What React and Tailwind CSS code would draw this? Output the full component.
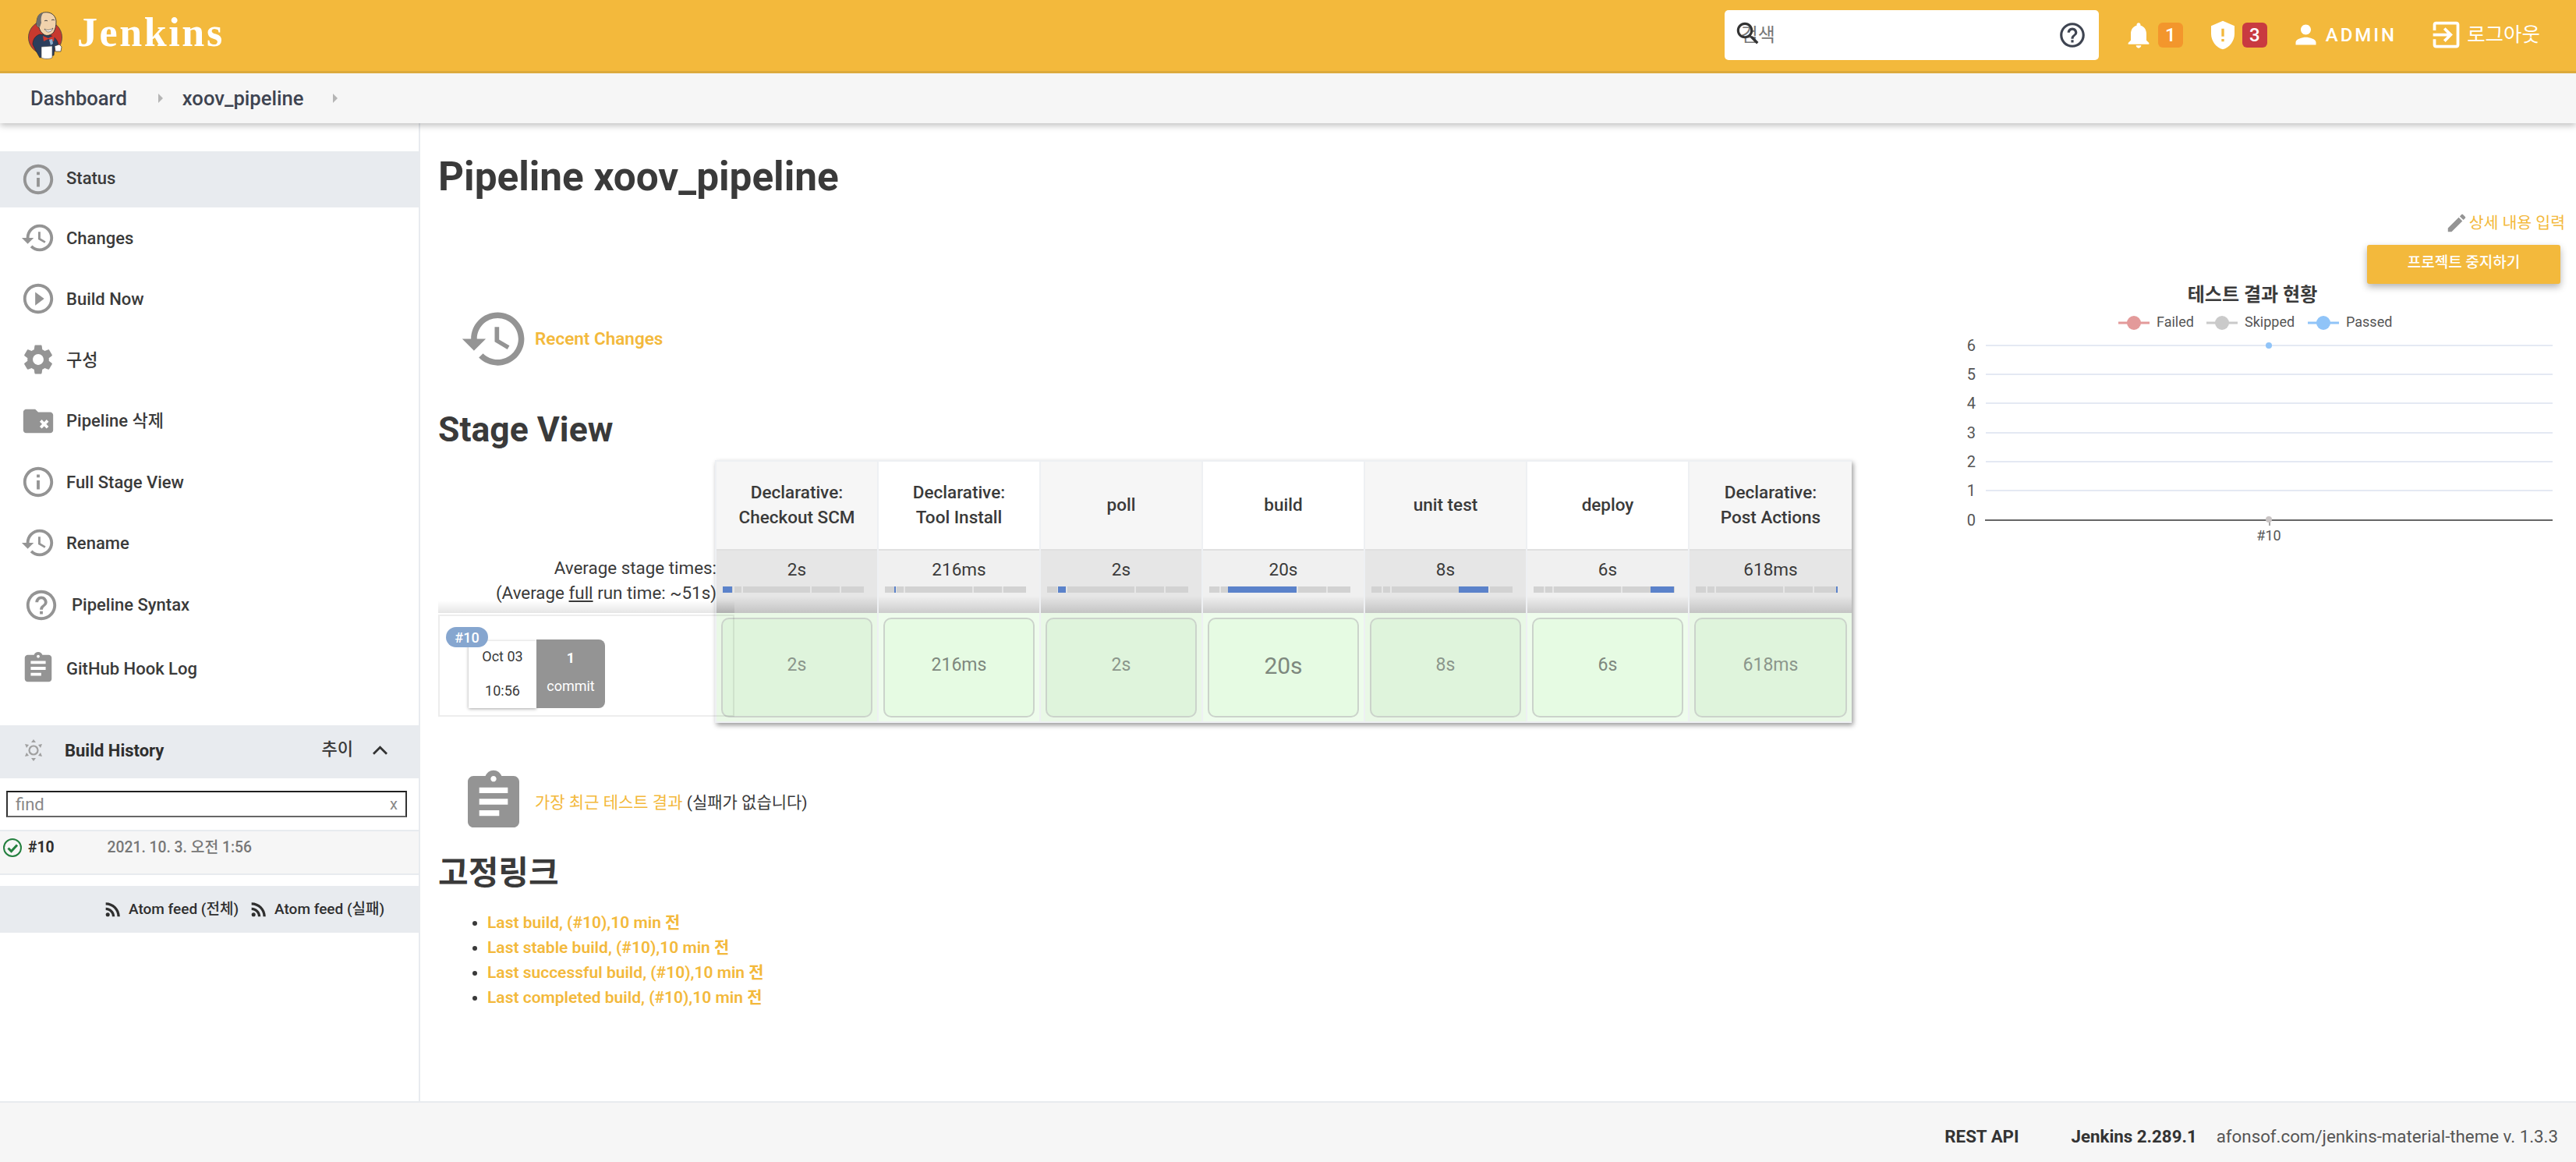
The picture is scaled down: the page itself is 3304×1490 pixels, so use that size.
import React from 'react';

const paths = {
  info: 'M11 7h2v2h-2zm0 4h2v6h-2zm1-9C6.48 2 2 6.48 2 12s4.48 10 10 10 10-4.48 10-10S17.52 2 12 2zm0 18c-4.41 0-8-3.59-8-8s3.59-8 8-8 8 3.59 8 8-3.59 8-8 8z',
  history: 'M13 3c-4.97 0-9 4.03-9 9H1l3.89 3.89.07.14L9 12H6c0-3.87 3.13-7 7-7s7 3.13 7 7-3.13 7-7 7c-1.93 0-3.68-.79-4.94-2.06l-1.42 1.42C8.27 19.99 10.51 21 13 21c4.97 0 9-4.03 9-9s-4.03-9-9-9zm-1 5v5l4.28 2.54.72-1.21-3.5-2.08V8H12z',
  play: 'M10 16.5l6-4.5-6-4.5v9zM12 2C6.48 2 2 6.48 2 12s4.48 10 10 10 10-4.48 10-10S17.52 2 12 2zm0 18c-4.41 0-8-3.59-8-8s3.59-8 8-8 8 3.59 8 8-3.59 8-8 8z',
  gear: 'M19.14 12.94c.04-.3.06-.61.06-.94 0-.32-.02-.64-.07-.94l2.03-1.58c.18-.14.23-.41.12-.61l-1.92-3.32c-.12-.22-.37-.29-.59-.22l-2.39.96c-.5-.38-1.03-.7-1.62-.94l-.36-2.54c-.04-.24-.24-.41-.48-.41h-3.84c-.24 0-.43.17-.47.41l-.36 2.54c-.59.24-1.13.57-1.62.94l-2.39-.96c-.22-.08-.47 0-.59.22L2.74 8.87c-.12.21-.08.47.12.61l2.03 1.58c-.05.3-.09.63-.09.94s.02.64.07.94l-2.03 1.58c-.18.14-.23.41-.12.61l1.92 3.32c.12.22.37.29.59.22l2.39-.96c.5.38 1.03.7 1.62.94l.36 2.54c.05.24.24.41.48.41h3.84c.24 0 .44-.17.47-.41l.36-2.54c.59-.24 1.13-.56 1.62-.94l2.39.96c.22.08.47 0 .59-.22l1.92-3.32c.12-.22.07-.47-.12-.61l-2.01-1.58zM12 15.6c-1.98 0-3.6-1.62-3.6-3.6s1.62-3.6 3.6-3.6 3.6 1.62 3.6 3.6-1.62 3.6-3.6 3.6z',
  folderX: 'M10 4H4c-1.1 0-2 .9-2 2v12c0 1.1.9 2 2 2h16c1.1 0 2-.9 2-2V8c0-1.1-.9-2-2-2h-8l-2-2zm4.4 7l1.6 1.6 1.6-1.6 1.4 1.4-1.6 1.6 1.6 1.6-1.4 1.4-1.6-1.6-1.6 1.6-1.4-1.4 1.6-1.6-1.6-1.6 1.4-1.4z',
  help: 'M11 18h2v-2h-2v2zm1-16C6.48 2 2 6.48 2 12s4.48 10 10 10 10-4.48 10-10S17.52 2 12 2zm0 18c-4.41 0-8-3.59-8-8s3.59-8 8-8 8 3.59 8 8-3.59 8-8 8zm0-14c-2.21 0-4 1.79-4 4h2c0-1.1.9-2 2-2s2 .9 2 2c0 2-3 1.75-3 5h2c0-2.25 3-2.5 3-5 0-2.21-1.79-4-4-4z',
  clipboard: 'M19 3h-4.18C14.4 1.84 13.3 1 12 1c-1.3 0-2.4.84-2.82 2H5c-1.1 0-2 .9-2 2v14c0 1.1.9 2 2 2h14c1.1 0 2-.9 2-2V5c0-1.1-.9-2-2-2zm-7 0c.55 0 1 .45 1 1s-.45 1-1 1-1-.45-1-1 .45-1 1-1zm2 14H7v-2h7v2zm3-4H7v-2h10v2zm0-4H7V7h10v2z',
  search: 'M15.5 14h-.79l-.28-.27C15.41 12.59 16 11.11 16 9.5 16 5.91 13.09 3 9.5 3S3 5.91 3 9.5 5.91 16 9.5 16c1.61 0 3.09-.59 4.23-1.57l.27.28v.79l5 4.99L20.49 19l-4.99-5zm-6 0C7.01 14 5 11.99 5 9.5S7.01 5 9.5 5 14 7.01 14 9.5 11.99 14 9.5 14z',
  bell: 'M12 22c1.1 0 2-.9 2-2h-4c0 1.1.9 2 2 2zm6-6v-5c0-3.07-1.64-5.64-4.5-6.32V4c0-.83-.67-1.5-1.5-1.5s-1.5.67-1.5 1.5v.68C7.63 5.36 6 7.92 6 11v5l-2 2v1h16v-1l-2-2z',
  shield: 'M12 1L3 5v6c0 5.55 3.84 10.74 9 12 5.16-1.26 9-6.45 9-12V5l-9-4zm-1 6h2v6h-2zm0 8h2v2h-2z',
  user: 'M12 12c2.21 0 4-1.79 4-4s-1.79-4-4-4-4 1.79-4 4 1.79 4 4 4zm0 2c-2.67 0-8 1.34-8 4v2h16v-2c0-2.66-5.33-4-8-4z',
  logout: 'M10.09 15.59L11.5 17l5-5-5-5-1.41 1.41L12.67 11H3v2h9.67l-2.58 2.59zM19 3H5c-1.11 0-2 .9-2 2v4h2V5h14v14H5v-4H3v4c0 1.1.89 2 2 2h14c1.1 0 2-.9 2-2V5c0-1.1-.9-2-2-2z',
  edit: 'M3 17.25V21h3.75L17.81 9.94l-3.75-3.75L3 17.25zM20.71 7.04c.39-.39.39-1.02 0-1.41l-2.34-2.34c-.39-.39-1.02-.39-1.41 0l-1.83 1.83 3.75 3.75 1.83-1.83z',
  rss: 'M6.18 15.64a2.18 2.18 0 1 0 0 4.36 2.18 2.18 0 0 0 0-4.36zM4 4.44v2.83c7.03 0 12.73 5.7 12.73 12.73h2.83c0-8.59-6.97-15.56-15.56-15.56zm0 5.66v2.83c3.9 0 7.07 3.17 7.07 7.07h2.83c0-5.47-4.43-9.9-9.9-9.9z',
};

const Icon = ({ name, className }) => (
  <svg viewBox="0 0 24 24" className={className} fill="currentColor" fillRule="evenodd">
    <path d={paths[name]} />
  </svg>
);

const JenkinsLogo = () => (
  <svg viewBox="0 0 44 62" className="w-[44px] h-[62px] shrink-0">
    <ellipse cx="22" cy="33" rx="21.5" ry="21.5" fill="#c8392e" stroke="#444" strokeWidth="0.8" />
    <path d="M6 42c0-6 3-11 9-13l12 1c5 1 9 4 11 9l1 6-5 2-1 9-18 3-5-9z" fill="#2c3e5c" stroke="#222" strokeWidth="0.6" />
    <path d="M12 8c2-6 8-8 14-7 6 1 10 6 10 12 0 5-1 9-3 13-3 4-9 6-13 3-3-2-5-5-6-9-2 0-4-3-3-6 0-3 1-5 1-6z" fill="#f1d2ac" stroke="#333" strokeWidth="0.9" />
    <path d="M12 8c1-5 5-7 8-7-3 3-4 8-3 13l-2 6c-3-1-5-4-4-7z" fill="#6d6d6d" />
    <path d="M21 22c3 2 7 2 11-1-1 3-3 5-6 5-2 0-4-2-5-4z" fill="#fff" stroke="#333" strokeWidth="0.6" />
    <path d="M21 12c1-1 3-1 4 0M30 11c1-1 3-1 4 0" fill="none" stroke="#333" strokeWidth="0.9" />
    <path d="M19 31l7 3 8-4-1 8-7-3-6 3z" fill="#d13a2f" />
    <path d="M27 36l4-1 1 6-3 2z" fill="#8fb0cf" />
    <path d="M17 45l14-1 0 15c-4 2-10 2-14 0z" fill="#fff" stroke="#444" strokeWidth="0.6" />
    <path d="M34 44l6-2 3 3-1 6-7 0z" fill="#fff" stroke="#333" strokeWidth="0.7" />
  </svg>
);

const SunIcon = () => (
  <svg viewBox="0 0 24 28" className="w-[24px] h-[28px] text-[#a0a0a0]" fill="currentColor">
    <circle cx="12" cy="14" r="5.5" fill="none" stroke="currentColor" strokeWidth="2.2" />
    <path d="M12 0l3 4H9zM12 28l-3-4h6zM1 6l5 1-3 4zM23 6l-2 5-3-4zM1 22l2-5 3 4zM23 22l-5-1 3-4z" />
  </svg>
);

const sideItems = [
  { label: 'Changes', icon: 'history', rowClass: 'h-[78px] pl-[26px] gap-[13px]' },
  { label: 'Build Now', icon: 'play', rowClass: 'h-[78px] pl-[26px] gap-[13px]' },
  { label: '구성', icon: 'gear', rowClass: 'h-[78px] pl-[26px] gap-[13px]' },
  { label: 'Pipeline 삭제', icon: 'folderX', rowClass: 'h-[79px] pl-[26px] gap-[13px]' },
  { label: 'Full Stage View', icon: 'info', rowClass: 'h-[78px] pl-[26px] gap-[13px]' },
  { label: 'Rename', icon: 'history', rowClass: 'h-[78px] pl-[26px] gap-[13px]' },
  { label: 'Pipeline Syntax', icon: 'help', rowClass: 'h-[81px] pl-[30px] gap-[16px]' },
  { label: 'GitHub Hook Log', icon: 'clipboard', rowClass: 'h-[82px] pl-[26px] gap-[13px]' },
];

const stages = [
  { title: ['Declarative:', 'Checkout SCM'], avg: '2s', left: 0, width: 12 },
  { title: ['Declarative:', 'Tool Install'], avg: '216ms', left: 12, width: 1.5 },
  { title: ['poll'], avg: '2s', left: 14, width: 10 },
  { title: ['build'], avg: '20s', left: 24, width: 88, big: true },
  { title: ['unit test'], avg: '8s', left: 112, width: 38 },
  { title: ['deploy'], avg: '6s', left: 150, width: 30 },
  { title: ['Declarative:', 'Post Actions'], avg: '618ms', left: 180, width: 1.5 },
];

const separators = [13, 24, 112, 150];

const StageColumn = ({ stage, odd }) => (
  <div className="w-[208px] shrink-0 flex flex-col border-r-2 border-[#eef0f3] last:border-r-0">
    <div className={`h-[112px] pb-[3px] flex flex-col items-center justify-center text-[22.5px] leading-[32px] font-medium text-[#3a3a3a] ${odd ? 'bg-[#f6f6f6]' : 'bg-white'}`}>
      {stage.title.map((line) => (
        <div key={line}>{line}</div>
      ))}
    </div>
    <div className={`relative h-[82px] border-t-2 border-[#e0e0e0] ${odd ? 'bg-[#e6e6e6]' : 'bg-[#f0f0f0]'}`}>
      <div className="text-center text-[22.5px] leading-[32px] text-[#3a3a3a] pt-[8px]">{stage.avg}</div>
      <div className="absolute left-[8px] top-[46px] w-[181px] h-[8px] bg-[#d2d2d2]">
        {separators.map((x) => (
          <div key={x} className="absolute top-0 h-full w-[2px] bg-[#e6e6e6]" style={{ left: x }} />
        ))}
        <div className="absolute top-0 h-full bg-[#5b82ca]" style={{ left: stage.left, width: stage.width }} />
      </div>
      <div className="absolute inset-x-0 bottom-0 h-[22px] bg-gradient-to-b from-transparent to-black/15" />
    </div>
    <div className={`h-[139px] p-[6px] pb-[4px] ${odd ? 'bg-[#e9f8e6]' : 'bg-[#eefcec]'}`}>
      <div className={`h-[128px] pb-[5px] rounded-[10px] border-2 border-[#cbd3cb] flex items-center justify-center ${odd ? 'bg-[#dff4dc] text-[#8b968b]' : 'bg-[#e6fbe3] text-[#7e887e]'} ${stage.big ? 'text-[30px] text-[#5f665f]' : 'text-[23px]'}`}>
        {stage.avg}
      </div>
    </div>
  </div>
);

const legend = [
  { label: 'Failed', color: '#e39a9a', x: 2737, tx: 2766 },
  { label: 'Skipped', color: '#cacaca', x: 2850, tx: 2879 },
  { label: 'Passed', color: '#90c4f8', x: 2980, tx: 3009 },
];

const grid = [
  { n: 6, y: 444 },
  { n: 5, y: 481 },
  { n: 4, y: 518 },
  { n: 3, y: 556 },
  { n: 2, y: 593 },
  { n: 1, y: 630 },
];

// chart coordinates are the screenshot's, the viewBox shifts them into the panel
const TrendChart = () => (
  <svg viewBox="2500 400 804 300" className="w-[804px] h-[300px]" fontFamily="Roboto, sans-serif">
    {legend.map((l) => (
      <g key={l.label}>
        <line x1={l.x - 20} x2={l.x + 20} y1="415" y2="415" stroke={l.color} strokeWidth="3" />
        <circle cx={l.x} cy="415" r="9" fill={l.color} />
        <text x={l.tx} y="420" fontSize="18" fill="#555">{l.label}</text>
      </g>
    ))}
    {grid.map((g) => (
      <g key={g.n}>
        <line x1="2547" x2="3274" y1={g.y} y2={g.y} stroke="#e4e9f3" strokeWidth="2" />
        <text x="2534" y={g.y + 7} fontSize="20" fill="#555" textAnchor="end">{g.n}</text>
      </g>
    ))}
    <line x1="2546" x2="3274" y1="668" y2="668" stroke="#666" strokeWidth="2" />
    <text x="2534" y="675" fontSize="20" fill="#555" textAnchor="end">0</text>
    <line x1="2911" x2="2911" y1="668" y2="675" stroke="#888" strokeWidth="1.5" />
    <circle cx="2910" cy="444" r="4" fill="#90c4f8" />
    <circle cx="2910" cy="667" r="4" fill="#c9c4c4" />
    <text x="2910" y="694" fontSize="18" fill="#555" textAnchor="middle">#10</text>
  </svg>
);

const App = () => (
  <div className="w-[3304px] h-[1490px] flex flex-col overflow-hidden bg-white font-['Roboto','Noto_Sans_CJK_KR',sans-serif] text-[#3a3a3a]">
    <header className="relative z-30 h-[94px] shrink-0 flex items-center bg-[#f3b93c] border-b-[3px] border-[#dcaa3c] pl-[36px] text-white">
      <JenkinsLogo />
      <span className="ml-[19px] font-['Liberation_Serif',serif] font-bold text-[52px] leading-none tracking-[2.6px] -mt-[8px]">Jenkins</span>
      <div className="ml-auto flex items-center pr-[46px] -mt-[2px]">
        <div className="relative w-[480px] h-[64px] bg-white rounded-[5px] flex items-center pl-[21px] pr-[15px] text-[#777] text-[24px]">
          <span>검색</span>
          <Icon name="search" className="absolute left-[11px] top-[11px] w-[38px] h-[38px] text-[#333]" />
          <Icon name="help" className="ml-auto w-[38px] h-[38px] text-[#3e4451]" />
        </div>
        <Icon name="bell" className="ml-[31px] w-[40px] h-[40px]" />
        <span className="ml-[5px] w-[32px] h-[32px] rounded-[6px] bg-[#f3962c] flex items-center justify-center text-[24px] font-medium">1</span>
        <Icon name="shield" className="ml-[31px] w-[40px] h-[40px]" />
        <span className="ml-[5px] w-[32px] h-[32px] rounded-[6px] bg-[#c93a40] flex items-center justify-center text-[24px] font-medium">3</span>
        <Icon name="user" className="ml-[30px] w-[39px] h-[39px]" />
        <span className="ml-[6px] text-[24px] font-medium tracking-[3px]">ADMIN</span>
        <Icon name="logout" className="ml-[41px] w-[45px] h-[45px]" />
        <span className="ml-[4px] text-[25.5px]">로그아웃</span>
      </div>
    </header>

    <nav className="relative z-20 h-[64px] shrink-0 flex items-center bg-[#f6f6f6] shadow-[0_3px_8px_rgba(0,0,0,0.25)] pl-[39px] text-[25.6px] font-medium text-[#3e4451]">
      <span>Dashboard</span>
      <span className="ml-[40px] w-0 h-0 border-y-[6px] border-y-transparent border-l-[6px] border-l-[#b5b5b5]" />
      <span className="ml-[25px]">xoov_pipeline</span>
      <span className="ml-[38px] w-0 h-0 border-y-[6px] border-y-transparent border-l-[6px] border-l-[#b5b5b5]" />
    </nav>

    <div className="flex-1 flex min-h-0">
      <aside className="w-[539px] shrink-0 border-r-2 border-[#e8ebef] pt-[36px]">
        <div className="h-[72px] flex items-center bg-[#e8ebef] pl-[26px] gap-[13px] text-[22px] font-medium">
          <Icon name="info" className="w-[46px] h-[46px] text-[#949494]" />
          <span className="-mt-[3px]">Status</span>
        </div>
        {sideItems.map((item) => (
          <div key={item.label} className={`flex items-center text-[22px] font-medium ${item.rowClass}`}>
            <Icon name={item.icon} className="w-[46px] h-[46px] text-[#949494] shrink-0" />
            <span>{item.label}</span>
          </div>
        ))}

        <div className="mt-[32px] h-[68px] pb-[4px] flex items-center bg-[#e8ebef] pl-[31px] pr-[40px] text-[22px]">
          <SunIcon />
          <span className="ml-[28px] font-bold text-[#2f2f2f]">Build History</span>
          <span className="ml-auto font-medium -mt-[4px]">추이</span>
          <svg viewBox="0 0 20 12" className="ml-[25px] w-[19px] h-[12px]" fill="none" stroke="#333" strokeWidth="3">
            <path d="M1 11l9-9 9 9" />
          </svg>
        </div>
        <div className="mt-[16px] ml-[8px] mr-[15px] h-[34px] flex items-center justify-between border-2 border-t-[#1f1f1f] border-x-[#333] border-b-[#666] px-[10px] text-[22px] text-[#888]">
          <span>find</span>
          <span className="text-[20px]">x</span>
        </div>
        <div className="mt-[16px] h-[58px] flex items-start bg-[#f6f6f6] border-y-2 border-[#e8ebef] pl-[4px] pt-[9px] text-[19.3px] leading-[24px]">
          <svg viewBox="0 0 24 24" className="w-[24px] h-[24px]" fill="none" stroke="#24803f" strokeWidth="2">
            <circle cx="12" cy="12" r="11" />
            <path d="M6.5 12.5l4 4 7.5-8" strokeWidth="3" />
          </svg>
          <span className="ml-[8px] font-bold text-[#2f2f2f]">#10</span>
          <span className="ml-[68px] font-medium text-[#777]">2021. 10. 3. 오전 1:56</span>
        </div>
        <div className="mt-[14px] h-[60px] flex items-center bg-[#e8ebef] pl-[131px] text-[19px] font-medium text-[#2f2f2f]">
          <Icon name="rss" className="w-[28px] h-[28px]" />
          <span className="ml-[6px]">Atom feed (전체)</span>
          <Icon name="rss" className="ml-[12px] w-[28px] h-[28px]" />
          <span className="ml-[6px]">Atom feed (실패)</span>
        </div>
      </aside>

      <main className="flex-1 flex min-w-0">
        <div className="flex-1 min-w-0 pl-[23px]">
          <h1 className="mt-[41px] h-[56px] text-[51.3px] leading-[56px] font-bold">Pipeline xoov_pipeline</h1>
          <div className="mt-[134px] ml-[27px] h-[91px] flex items-center">
            <Icon name="history" className="w-[91px] h-[91px] text-[#949494]" />
            <a className="ml-[6px] text-[22.5px] font-semibold text-[#f3b93c]">Recent Changes</a>
          </div>
          <h2 className="mt-[46px] h-[50px] text-[44.5px] leading-[50px] font-bold">Stage View</h2>
          <div className="mt-[14px] flex items-start">
            <div className="relative z-10 w-[380px] shrink-0 -mr-[25px]">
              <div className="relative h-[196px] flex flex-col justify-end items-end pr-[23px] pb-[10px] text-[22.4px] leading-[32px] text-[#3a3a3a]">
                <div>Average stage times:</div>
                <div>(Average <span className="underline">full</span> run time: ~51s)</div>
                <div className="absolute inset-x-0 bottom-0 h-[16px] bg-gradient-to-b from-transparent to-black/10" />
              </div>
              <div className="relative h-[131px] border-2 border-black/[0.07] mt-[2px]">
                <span className="absolute z-10 left-[8px] top-[14px] w-[54px] h-[26px] rounded-[13px] bg-[#86a6cf] text-white text-[18px] font-medium flex items-center justify-center">#10</span>
                <div className="ml-[37px] mt-[30px] flex">
                  <div className="w-[87px] h-[86px] mt-[2px] bg-white shadow-[0_1px_4px_rgba(0,0,0,0.35)] flex flex-col items-center justify-between pt-[6px] pb-[9px] text-[18px] text-[#3a3a3a]">
                    <span>Oct 03</span>
                    <span>10:56</span>
                  </div>
                  <div className="w-[88px] h-[88px] rounded-r-[8px] bg-[#949494] text-white flex flex-col items-center text-[18px] pt-[10px] gap-[9px]">
                    <span className="font-bold">1</span>
                    <span>commit</span>
                  </div>
                </div>
              </div>
            </div>
            <div className="flex shrink-0 border-2 border-[#eef0f3] border-r-0 shadow-[2px_3px_6px_rgba(0,0,0,0.4)]">
              {stages.map((stage, i) => (
                <StageColumn key={stage.title.join(' ')} stage={stage} odd={i % 2 === 0} />
              ))}
            </div>
          </div>
          <div className="mt-[57px] ml-[27px] h-[88px] flex items-center">
            <Icon name="clipboard" className="w-[88px] h-[88px] text-[#949494]" />
            <span className="ml-[9px] text-[21px] mt-[4px]">
              <a className="text-[#f3b93c]">가장 최근 테스트 결과</a> (실패가 없습니다)
            </span>
          </div>
          <h2 className="mt-[23px] h-[50px] text-[42px] leading-[50px] font-bold">고정링크</h2>
          <ul className="mt-[22px] pl-[63px] list-disc text-[21px] leading-[32px] font-semibold text-[#f3b93c] marker:text-[#3a3a3a]">
            <li>Last build, (#10),10 min 전</li>
            <li>Last stable build, (#10),10 min 전</li>
            <li>Last successful build, (#10),10 min 전</li>
            <li>Last completed build, (#10),10 min 전</li>
          </ul>
        </div>

        <div className="w-[804px] shrink-0 flex flex-col items-end">
          <div className="mt-[113px] mr-[14px] h-[30px] flex items-center">
            <Icon name="edit" className="w-[30px] h-[30px] text-[#949494]" />
            <a className="ml-[1px] text-[20.5px] text-[#f3b93c]">상세 내용 입력</a>
          </div>
          <button className="mt-[13px] mr-[20px] w-[248px] h-[50px] rounded-[3px] bg-[#f3b93c] text-white text-[19px] font-medium pb-[4px] shadow-[0_4px_10px_rgba(0,0,0,0.3)]">프로젝트 중지하기</button>
          <h3 className="w-[778px] mr-[26px] text-center text-[24px] leading-[28px] font-bold">테스트 결과 현황</h3>
          <div className="mt-[7px]">
            <TrendChart />
          </div>
        </div>
      </main>
    </div>

    <footer className="h-[78px] shrink-0 flex items-center justify-end bg-[#f6f6f6] border-t-2 border-[#e8ebef] pr-[23px] pt-[12px] text-[22.3px]">
      <span className="font-bold text-[#333]">REST API</span>
      <span className="ml-[67px] font-bold text-[#333]">Jenkins 2.289.1</span>
      <span className="ml-[25px] text-[#555]">afonsof.com/jenkins-material-theme v. 1.3.3</span>
    </footer>
  </div>
);

export default App;
